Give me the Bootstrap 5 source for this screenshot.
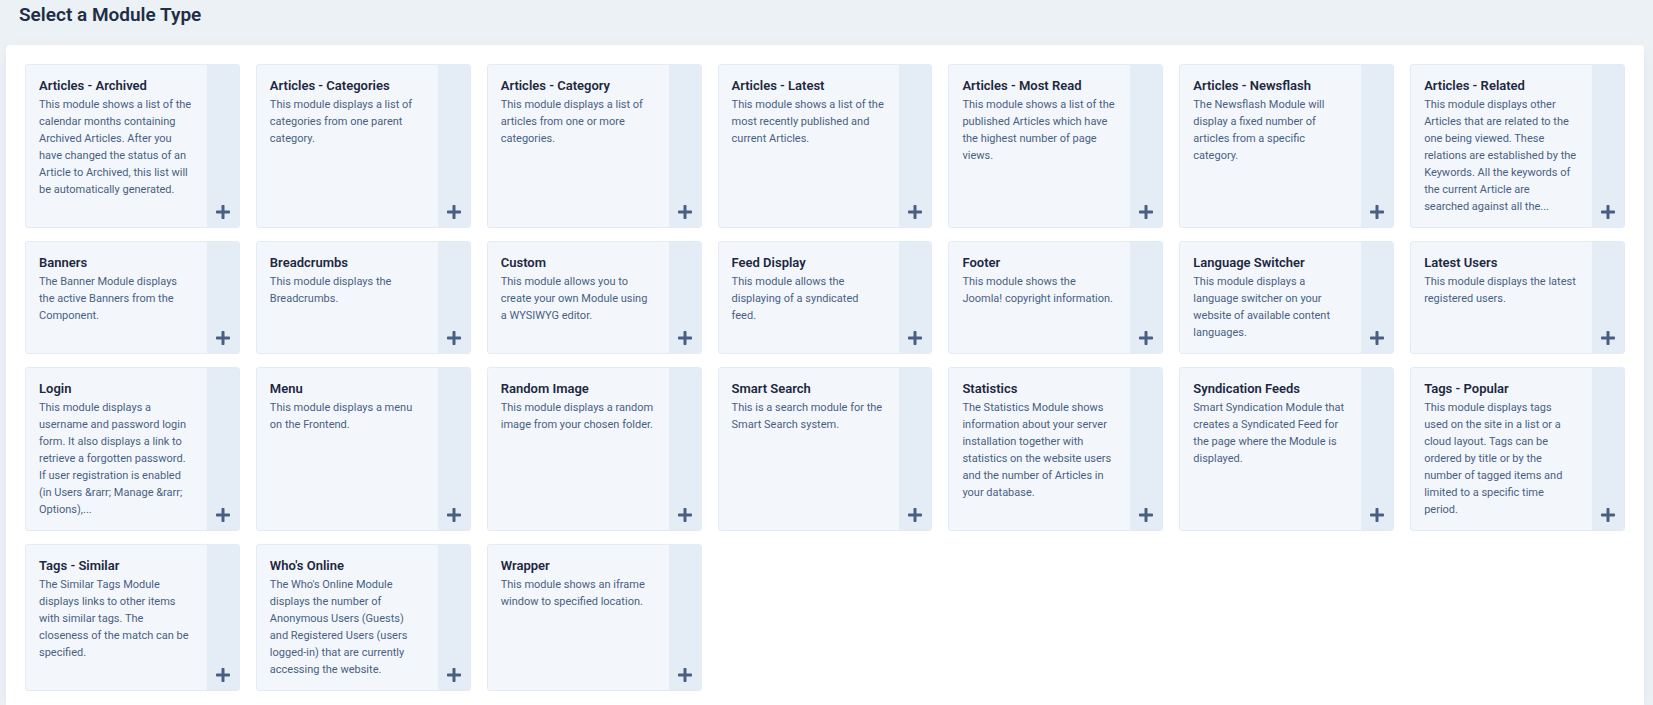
<!DOCTYPE html>
<html lang="en">
<head>
<meta charset="utf-8">
<meta name="viewport" content="width=device-width, initial-scale=1">
<title>Select a Module Type</title>
<link href="https://cdn.jsdelivr.net/npm/bootstrap@5.3.0/dist/css/bootstrap.min.css" rel="stylesheet">
<style>
body { background: #ebf1f5; font-family: Roboto, sans-serif; color: #212d44; }
.page-title { font-size: 19px; line-height: 30px; font-weight: 600; margin: 0 0 15px 13px; }
.page-wrap { padding: 0 9px 0 6px; }
.panel { background: #fff; border-radius: 4px 4px 0 0; padding: 19px 19px 15px; box-shadow: 0 2px 10px -8px rgba(20, 40, 80, .3), 0 4px 20px rgba(20, 40, 80, .03); }
.module-grid { display: grid; grid-template-columns: repeat(auto-fill, minmax(210px, 1fr)); gap: 13px 16px; }
.module { background: #f3f7fc; border: 1px solid #e3ebf5; border-radius: 3px; color: #495f82; overflow: hidden; }
.module:hover { border-color: #495f82; }
.module-text { flex: 1; min-width: 0; padding: 12px 12px 12px 13px; }
.module-text h2 { font-size: 13px; line-height: 17px; font-weight: 600; color: #1d2840; margin: 0 0 2px; }
.module-text p { font-size: 11px; line-height: 17px; margin: 0; }
.module-add { width: 32px; background: #e4ecf6; padding-bottom: 8px; }
</style>
</head>
<body>
<svg class="d-none" xmlns="http://www.w3.org/2000/svg"><symbol id="plus" viewBox="0 0 14 14"><path d="M6.3 0h1.4q.8 0 .8.8v4.7h4.7q.8 0 .8.8v1.4q0 .8-.8.8H8.500v4.700q0 .8-.8.8H6.300q-.8 0-.8-.8V8.500H.8q-.8 0-.8-.8V6.300q0-.8.8-.8h4.700V.8q0-.8.8-.8z" fill="currentColor"/></symbol></svg>
<div class="page-wrap d-flex flex-column min-vh-100">
<h1 class="page-title">Select a Module Type</h1>
<main class="panel flex-grow-1">
<div class="module-grid">
<a href="#" class="module d-flex text-decoration-none"><div class="module-text"><h2>Articles - Archived</h2><p>This module shows a list of the calendar months containing Archived Articles. After you have changed the status of an Article to Archived, this list will be automatically generated.</p></div><span class="module-add d-flex align-items-end justify-content-center"><svg width="14" height="14" aria-hidden="true"><use href="#plus"/></svg></span></a>
<a href="#" class="module d-flex text-decoration-none"><div class="module-text"><h2>Articles - Categories</h2><p>This module displays a list of categories from one parent category.</p></div><span class="module-add d-flex align-items-end justify-content-center"><svg width="14" height="14" aria-hidden="true"><use href="#plus"/></svg></span></a>
<a href="#" class="module d-flex text-decoration-none"><div class="module-text"><h2>Articles - Category</h2><p>This module displays a list of articles from one or more categories.</p></div><span class="module-add d-flex align-items-end justify-content-center"><svg width="14" height="14" aria-hidden="true"><use href="#plus"/></svg></span></a>
<a href="#" class="module d-flex text-decoration-none"><div class="module-text"><h2>Articles - Latest</h2><p>This module shows a list of the most recently published and current Articles.</p></div><span class="module-add d-flex align-items-end justify-content-center"><svg width="14" height="14" aria-hidden="true"><use href="#plus"/></svg></span></a>
<a href="#" class="module d-flex text-decoration-none"><div class="module-text"><h2>Articles - Most Read</h2><p>This module shows a list of the published Articles which have the highest number of page views.</p></div><span class="module-add d-flex align-items-end justify-content-center"><svg width="14" height="14" aria-hidden="true"><use href="#plus"/></svg></span></a>
<a href="#" class="module d-flex text-decoration-none"><div class="module-text"><h2>Articles - Newsflash</h2><p>The Newsflash Module will display a fixed number of articles from a specific category.</p></div><span class="module-add d-flex align-items-end justify-content-center"><svg width="14" height="14" aria-hidden="true"><use href="#plus"/></svg></span></a>
<a href="#" class="module d-flex text-decoration-none"><div class="module-text"><h2>Articles - Related</h2><p>This module displays other Articles that are related to the one being viewed. These relations are established by the Keywords. All the keywords of the current Article are<br>searched against all the...</p></div><span class="module-add d-flex align-items-end justify-content-center"><svg width="14" height="14" aria-hidden="true"><use href="#plus"/></svg></span></a>

<a href="#" class="module d-flex text-decoration-none"><div class="module-text"><h2>Banners</h2><p>The Banner Module displays the active Banners from the Component.</p></div><span class="module-add d-flex align-items-end justify-content-center"><svg width="14" height="14" aria-hidden="true"><use href="#plus"/></svg></span></a>
<a href="#" class="module d-flex text-decoration-none"><div class="module-text"><h2>Breadcrumbs</h2><p>This module displays the Breadcrumbs.</p></div><span class="module-add d-flex align-items-end justify-content-center"><svg width="14" height="14" aria-hidden="true"><use href="#plus"/></svg></span></a>
<a href="#" class="module d-flex text-decoration-none"><div class="module-text"><h2>Custom</h2><p>This module allows you to create your own Module using<br>a WYSIWYG editor.</p></div><span class="module-add d-flex align-items-end justify-content-center"><svg width="14" height="14" aria-hidden="true"><use href="#plus"/></svg></span></a>
<a href="#" class="module d-flex text-decoration-none"><div class="module-text"><h2>Feed Display</h2><p>This module allows the displaying of a syndicated<br>feed.</p></div><span class="module-add d-flex align-items-end justify-content-center"><svg width="14" height="14" aria-hidden="true"><use href="#plus"/></svg></span></a>
<a href="#" class="module d-flex text-decoration-none"><div class="module-text"><h2>Footer</h2><p>This module shows the<br>Joomla! copyright information.</p></div><span class="module-add d-flex align-items-end justify-content-center"><svg width="14" height="14" aria-hidden="true"><use href="#plus"/></svg></span></a>
<a href="#" class="module d-flex text-decoration-none"><div class="module-text"><h2>Language Switcher</h2><p>This module displays a language switcher on your website of available content languages.</p></div><span class="module-add d-flex align-items-end justify-content-center"><svg width="14" height="14" aria-hidden="true"><use href="#plus"/></svg></span></a>
<a href="#" class="module d-flex text-decoration-none"><div class="module-text"><h2>Latest Users</h2><p>This module displays the latest registered users.</p></div><span class="module-add d-flex align-items-end justify-content-center"><svg width="14" height="14" aria-hidden="true"><use href="#plus"/></svg></span></a>

<a href="#" class="module d-flex text-decoration-none"><div class="module-text"><h2>Login</h2><p>This module displays a username and password login form. It also displays a link to retrieve a forgotten password. If user registration is enabled (in Users &amp;rarr; Manage &amp;rarr; Options),...</p></div><span class="module-add d-flex align-items-end justify-content-center"><svg width="14" height="14" aria-hidden="true"><use href="#plus"/></svg></span></a>
<a href="#" class="module d-flex text-decoration-none"><div class="module-text"><h2>Menu</h2><p>This module displays a menu on the Frontend.</p></div><span class="module-add d-flex align-items-end justify-content-center"><svg width="14" height="14" aria-hidden="true"><use href="#plus"/></svg></span></a>
<a href="#" class="module d-flex text-decoration-none"><div class="module-text"><h2>Random Image</h2><p>This module displays a random image from your chosen folder.</p></div><span class="module-add d-flex align-items-end justify-content-center"><svg width="14" height="14" aria-hidden="true"><use href="#plus"/></svg></span></a>
<a href="#" class="module d-flex text-decoration-none"><div class="module-text"><h2>Smart Search</h2><p>This is a search module for the Smart Search system.</p></div><span class="module-add d-flex align-items-end justify-content-center"><svg width="14" height="14" aria-hidden="true"><use href="#plus"/></svg></span></a>
<a href="#" class="module d-flex text-decoration-none"><div class="module-text"><h2>Statistics</h2><p>The Statistics Module shows information about your server installation together with statistics on the website users and the number of Articles in your database.</p></div><span class="module-add d-flex align-items-end justify-content-center"><svg width="14" height="14" aria-hidden="true"><use href="#plus"/></svg></span></a>
<a href="#" class="module d-flex text-decoration-none"><div class="module-text"><h2>Syndication Feeds</h2><p>Smart Syndication Module that creates a Syndicated Feed for the page where the Module is displayed.</p></div><span class="module-add d-flex align-items-end justify-content-center"><svg width="14" height="14" aria-hidden="true"><use href="#plus"/></svg></span></a>
<a href="#" class="module d-flex text-decoration-none"><div class="module-text"><h2>Tags - Popular</h2><p>This module displays tags<br>used on the site in a list or a<br>cloud layout. Tags can be<br>ordered by title or by the<br>number of tagged items and<br>limited to a specific time<br>period.</p></div><span class="module-add d-flex align-items-end justify-content-center"><svg width="14" height="14" aria-hidden="true"><use href="#plus"/></svg></span></a>

<a href="#" class="module d-flex text-decoration-none"><div class="module-text"><h2>Tags - Similar</h2><p>The Similar Tags Module displays links to other items with similar tags. The closeness of the match can be specified.</p></div><span class="module-add d-flex align-items-end justify-content-center"><svg width="14" height="14" aria-hidden="true"><use href="#plus"/></svg></span></a>
<a href="#" class="module d-flex text-decoration-none"><div class="module-text"><h2>Who's Online</h2><p>The Who's Online Module displays the number of Anonymous Users (Guests)<br>and Registered Users (users<br>logged-in) that are currently<br>accessing the website.</p></div><span class="module-add d-flex align-items-end justify-content-center"><svg width="14" height="14" aria-hidden="true"><use href="#plus"/></svg></span></a>
<a href="#" class="module d-flex text-decoration-none"><div class="module-text"><h2>Wrapper</h2><p>This module shows an iframe window to specified location.</p></div><span class="module-add d-flex align-items-end justify-content-center"><svg width="14" height="14" aria-hidden="true"><use href="#plus"/></svg></span></a>
</div>
</main>
</div>
<script src="https://cdn.jsdelivr.net/npm/bootstrap@5.3.0/dist/js/bootstrap.bundle.min.js"></script>
</body>
</html>
